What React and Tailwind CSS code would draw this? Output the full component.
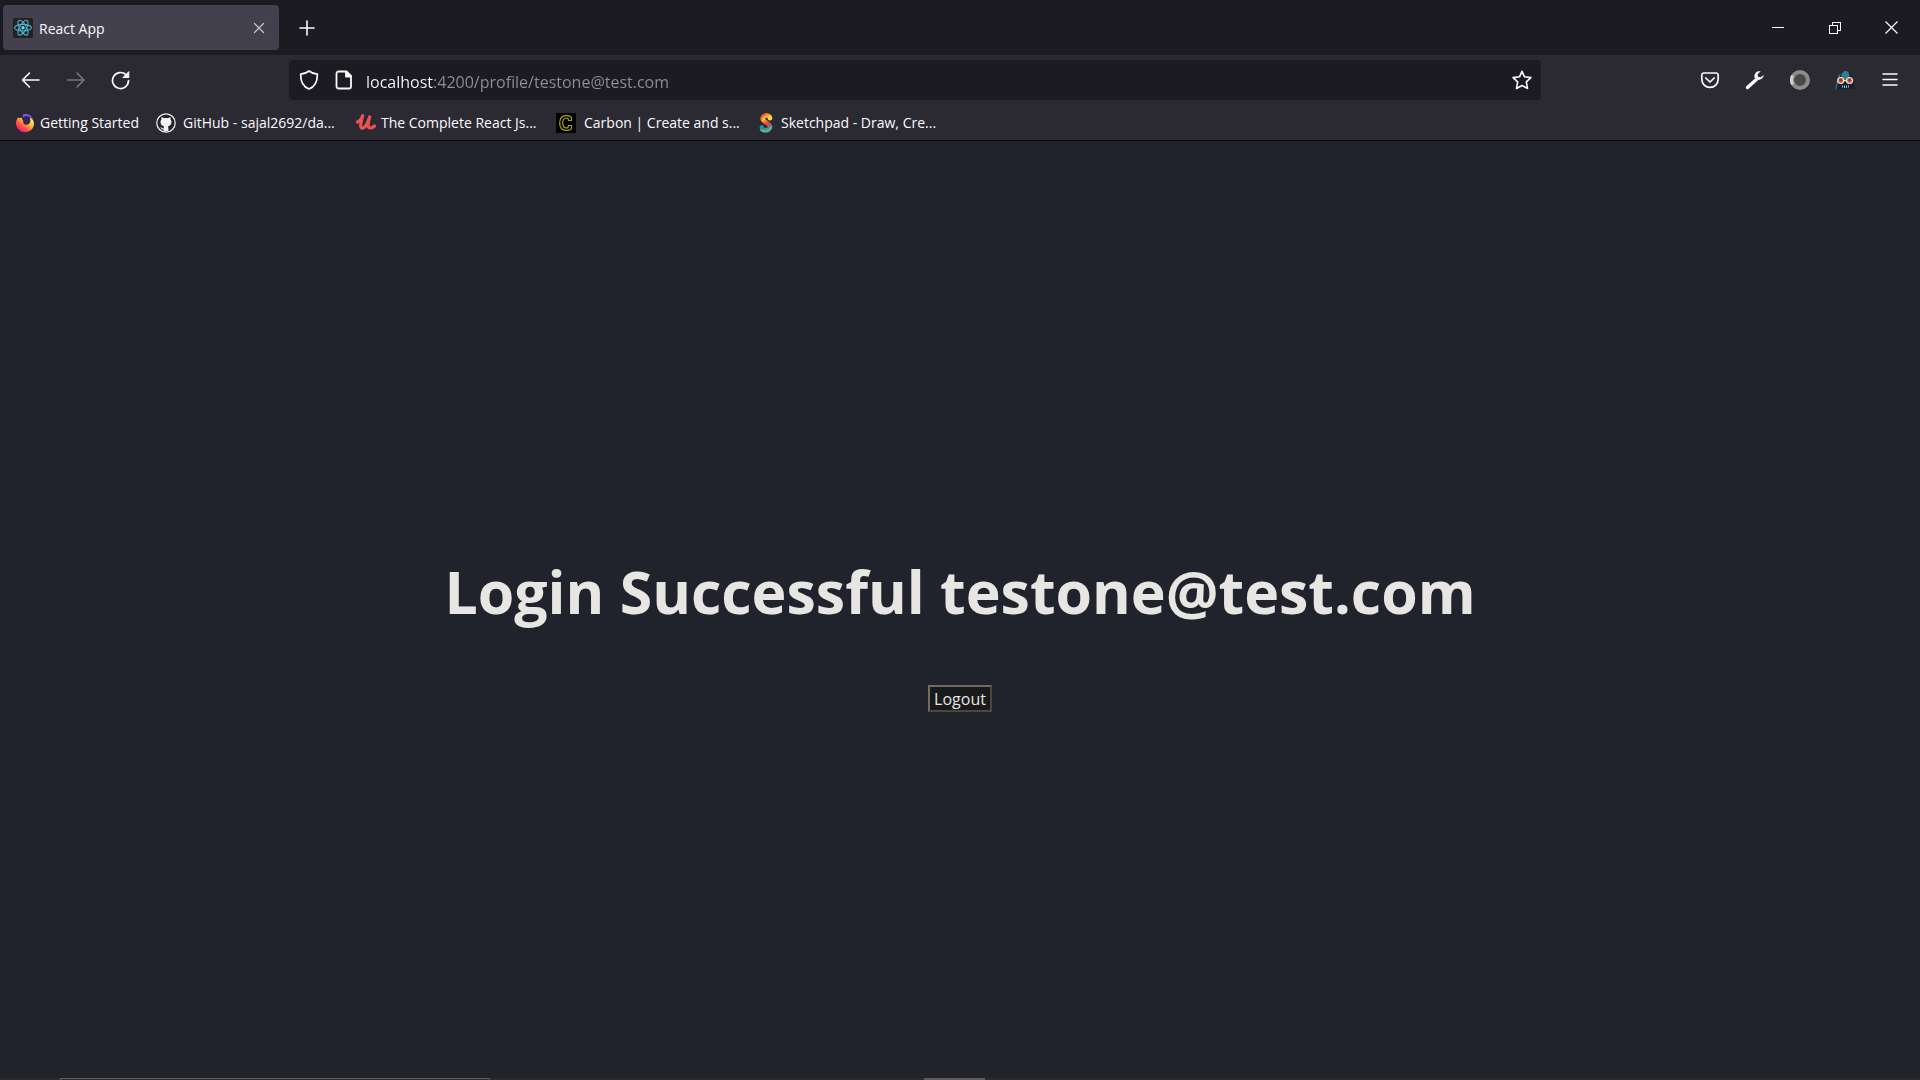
import React from "react";

const iconButton = "flex h-10 w-[45px] shrink-0 items-center justify-center rounded";

function ReactIcon() {
  return (
    <svg className="size-5 shrink-0" viewBox="0 0 20 20" aria-hidden="true">
      <rect width="20" height="20" rx="2" fill="#222222" />
      <g fill="none" stroke="#4fb3d0" strokeWidth="1.1">
        <ellipse cx="10" cy="9.7" rx="8.4" ry="3.3" />
        <ellipse cx="10" cy="9.7" rx="8.4" ry="3.3" transform="rotate(60 10 9.7)" />
        <ellipse cx="10" cy="9.7" rx="8.4" ry="3.3" transform="rotate(120 10 9.7)" />
      </g>
      <circle cx="10" cy="9.7" r="1.7" fill="#61dafb" />
    </svg>
  );
}

function FirefoxIcon() {
  return (
    <svg className="size-5 shrink-0" viewBox="0 0 20 20" aria-hidden="true">
      <defs>
        <linearGradient id="fox" x1="0.85" y1="0.15" x2="0.2" y2="0.9">
          <stop offset="0" stopColor="#fff44f" />
          <stop offset="0.35" stopColor="#ffb13b" />
          <stop offset="0.65" stopColor="#ff5a4a" />
          <stop offset="1" stopColor="#f5156c" />
        </linearGradient>
        <linearGradient id="globe" x1="0.3" y1="0" x2="0.6" y2="1">
          <stop offset="0" stopColor="#9059ff" />
          <stop offset="1" stopColor="#4a2a9c" />
        </linearGradient>
      </defs>
      <path d="M8 1.600C12 -.3 18 2.500 18.700 8.500L15 13L8 8Z" fill="url(#globe)" />
      <circle cx="11.500" cy="7.800" r="4.700" fill="#33284f" />
      <path d="M3.200 4.200C3.700 4.500 4 5 4.300 5.300C5 4.800 6 4.500 7.200 4.700C7 6 7.300 7 8.300 7.700C7.600 10.500 9.600 12 11.700 11.800C15.200 11.500 16.300 8 14.800 4.800C17.500 6 19 8.300 19 11C18.700 15.800 14.800 19.200 10 19.200C4.600 19.200 1 15 1 10.300C1 8 1.800 6 3.200 4.200Z" fill="url(#fox)" />
    </svg>
  );
}

function GitHubIcon() {
  return (
    <svg className="size-5 shrink-0" viewBox="0 0 20 20" aria-hidden="true">
      <circle cx="10" cy="10" r="9.800" fill="#f4f4f6" />
      <circle cx="10" cy="10" r="8.600" fill="#24232a" />
      <path d="M5.600 4.300C6.500 4.300 7.400 4.800 8 5.300C9.300 5 10.700 5 12 5.300C12.700 4.800 13.600 4.300 14.400 4.300C14.800 5.200 14.700 6 14.500 6.500C15.400 7.500 15.600 8.700 15.400 9.900C15 12 13.700 13 11.800 13.200C12.300 13.800 12.400 14.400 12.400 15V18.300H7.600V16.500C6 16.800 5.400 16 5 15.200C4.800 14.800 4.500 14.500 4.100 14.200C5.500 13.900 5.900 15.400 7.100 15.400H7.600C7.600 14.500 7.700 13.700 8.200 13.200C6.300 13 5 12 4.600 9.900C4.400 8.700 4.600 7.500 5.500 6.500C5.300 6 5.200 5.200 5.600 4.300Z" fill="#f4f4f6" />
    </svg>
  );
}

function UdemyIcon() {
  return (
    <svg className="size-5 shrink-0" viewBox="0 0 20 20" aria-hidden="true" fill="none" stroke="#ec5252" strokeLinecap="round" strokeLinejoin="round">
      <path d="M1.500 9C4 8 5.500 5.500 6.700 2.600C6 6 4.500 10 4.700 13C5 17.500 10 15 12.500 7" strokeWidth="3.200" />
      <path d="M13.700 4C12.500 7.500 11.800 11 12.300 13.500C13 16 16.500 15 18.500 13" strokeWidth="3.200" />
    </svg>
  );
}

function CarbonIcon() {
  return (
    <svg className="size-5 shrink-0" viewBox="0 0 20 20" aria-hidden="true">
      <rect width="20" height="20" fill="#000" />
      <path d="M15.500 7.500V5.500C15.500 3.800 14 2.700 11 2.700H10C6 2.700 3.700 5.500 3.700 10S6 17.300 10 17.300H11C14 17.300 15.500 16.200 15.500 14.500V12.500H12.500C12.500 14.400 12 15 10.500 15C7.700 15 6.700 13.300 6.700 10S7.700 5 10.500 5C12 5 12.500 5.600 12.500 7.500Z" fill="none" stroke="#a8a117" strokeWidth="1.200" />
    </svg>
  );
}

function SketchpadIcon() {
  return (
    <svg className="size-5 shrink-0" viewBox="0 0 20 20" aria-hidden="true">
      <defs>
        <linearGradient id="sketch" x1="0" y1="0" x2="0.3" y2="1">
          <stop offset="0" stopColor="#f26522" />
          <stop offset="0.3" stopColor="#ffc53a" />
          <stop offset="0.55" stopColor="#f26522" />
          <stop offset="0.75" stopColor="#e5402a" />
          <stop offset="1" stopColor="#2a9ad4" />
        </linearGradient>
      </defs>
      <path d="M14.300 5C13.500 2.300 10 1.600 8 3.400C5.500 5.700 7.500 8 10.500 9.700C14.500 12 15 14.500 12.500 16.500C10 18.200 6.500 17 5.700 14.500" fill="none" stroke="url(#sketch)" strokeWidth="4.600" />
      <path d="M7.500 18.300C12 19 14.800 16.500 15.300 13.500" fill="none" stroke="#78b843" strokeWidth="1.800" />
      <path d="M4.500 16.500C6 18 7.500 18.500 9 18" fill="none" stroke="#78b843" strokeWidth="2" />
      <circle cx="14" cy="5.300" r="2.200" fill="#ffdd3c" />
      <circle cx="5.800" cy="14.500" r="2.200" fill="#218fc7" />
      <path d="M5 7C4.500 3.500 6.500 1.300 9 1" fill="none" stroke="#e14d2c" strokeWidth="1.300" />
    </svg>
  );
}

function Stroke({ children, size = 20, width = 2, className = "" }) {
  return (
    <svg width={size} height={size} viewBox={`0 0 ${size} ${size}`} fill="none" stroke="currentColor" strokeWidth={width} strokeLinecap="round" strokeLinejoin="round" className={`shrink-0 ${className}`} aria-hidden="true">
      {children}
    </svg>
  );
}

const bookmarks = [
  { label: "Getting Started", Icon: FirefoxIcon, box: "w-[126px] gap-[5px]" },
  { label: "GitHub - sajal2692/da...", Icon: GitHubIcon, box: "w-[185px] gap-[7px]" },
  { label: "The Complete React Js...", Icon: UdemyIcon, box: "w-[185px] gap-[5px]" },
  { label: "Carbon | Create and s...", Icon: CarbonIcon, box: "w-[185px] gap-2" },
  { label: "Sketchpad - Draw, Cre...", Icon: SketchpadIcon, box: "w-[185px] gap-[5px]" },
];

function TabStrip() {
  return (
    <header className="flex h-[55px] items-center bg-[#1c1b22]">
      <div className="ml-[3px] flex h-[45px] w-[276px] items-center rounded bg-[#42414d] pl-[10px] pr-[12px]">
        <ReactIcon />
        <span className="ml-[6px] flex-1 pt-[2px] text-[14px]">React App</span>
        <button aria-label="Close tab" className="text-[#c4c4ca]">
          <Stroke size={16} width={1.2}><path d="M3.500 3.500L12.500 12.500M12.500 3.500L3.500 12.500" /></Stroke>
        </button>
      </div>
      <button aria-label="New tab" className="ml-[18px]">
        <Stroke width={1.6}><path d="M10 3V17M3 10H17" /></Stroke>
      </button>
      <div className="flex-1" />
      <button aria-label="Minimize" className="flex h-full w-[57px] items-center justify-center">
        <svg width="12" height="12" viewBox="0 0 12 12" stroke="currentColor" shapeRendering="crispEdges"><path d="M0 5.500H12" /></svg>
      </button>
      <button aria-label="Restore" className="flex h-full w-[57px] items-center justify-center">
        <svg width="12" height="12" viewBox="0 0 12 12" fill="none" stroke="currentColor" shapeRendering="crispEdges"><path d="M.5 3.500H8.500V11.500H.5ZM3.500 3V.5H11.500V8.500H9" /></svg>
      </button>
      <button aria-label="Close window" className="flex h-full w-[57px] items-center justify-center">
        <svg width="13" height="13" viewBox="0 0 13 13" stroke="currentColor" strokeWidth="1.200"><path d="M.5 .5L12.500 12.500M12.500 .5L.5 12.500" /></svg>
      </button>
    </header>
  );
}

function NavBar() {
  return (
    <nav className="flex h-[50px] items-center px-2">
      <button aria-label="Back" className={iconButton}>
        <Stroke width={1.6}><path d="M18 10H1.500M8.500 3L1.500 10L8.500 17" /></Stroke>
      </button>
      <button aria-label="Forward" className={`${iconButton} text-[#77767e]`}>
        <Stroke width={1.6}><path d="M1.500 10H18M11 3L18 10L11 17" /></Stroke>
      </button>
      <button aria-label="Reload" className={iconButton}>
        <svg width="20" height="20" viewBox="0 0 20 20" fill="none" stroke="currentColor" strokeWidth="1.700" strokeLinecap="round" aria-hidden="true">
          <path d="M17.500 10.500A8 8 0 1 1 15 4.700" />
          <path d="M17.800 2V7.500H12.300Z" fill="currentColor" strokeWidth="1" strokeLinejoin="round" />
        </svg>
      </button>
      <div className="w-[146px]" />
      <div className="flex h-10 flex-1 items-center rounded bg-[#1c1b22] pl-[10px] pr-[9px]">
        <button aria-label="Site protection">
          <Stroke width={1.7}><path d="M10 1C12.500 3 15 3.900 18.300 4.200C18.500 10 17.500 16 10 19C2.500 16 1.500 10 1.700 4.200C5 3.900 7.500 3 10 1Z" /></Stroke>
        </button>
        <button aria-label="Site information" className="ml-[15px]">
          <Stroke width={1.8}>
            <path d="M4.500 1.500H12.500L17 6V16.500A2 2 0 0 1 15 18.500H4.500A2 2 0 0 1 2.500 16.500V3.500A2 2 0 0 1 4.500 1.500Z" />
            <path d="M12 2V6.500H16.500Z" fill="currentColor" />
          </Stroke>
        </button>
        <input
          aria-label="Address"
          defaultValue="localhost:4200/profile/testone@test.com"
          className="ml-[12px] h-10 flex-1 bg-[linear-gradient(90deg,#fbfbfe_68px,#8f8e98_68px)] bg-clip-text pt-[3px] text-[16px] text-transparent caret-white outline-none"
        />
        <button aria-label="Bookmark this page">
          <Stroke width={1.6}><path d="M10 1.300L12.500 6.800L18.900 7.600L14.300 11.900L15.500 18.500L10 15.500L4.500 18.500L5.700 11.900L1.100 7.600L7.500 6.800Z" /></Stroke>
        </button>
      </div>
      <div className="w-[146px]" />
      <button aria-label="Save to Pocket" className={iconButton}>
        <Stroke width={1.7}>
          <path d="M3.500 3H16.500A2 2 0 0 1 18.200 5V9C18.200 14 14.500 17.300 10 17.300S1.800 14 1.800 9V5A2 2 0 0 1 3.500 3Z" />
          <path d="M5.800 8L10 12L14.200 8" />
        </Stroke>
      </button>
      <button aria-label="Developer tools" className={iconButton}>
        <svg width="20" height="20" viewBox="0 0 20 20" aria-hidden="true">
          <path d="M2.500 17.500L12.500 8.500" stroke="currentColor" strokeWidth="3.400" strokeLinecap="round" />
          <path d="M15.800 1.300A5.200 5.200 0 0 0 9.600 7.800A5.200 5.200 0 0 0 18.800 5L15.600 7.300L12.900 6.800L12.700 4Z" fill="currentColor" />
        </svg>
      </button>
      <button aria-label="Recorder extension" className={iconButton}>
        <svg width="20" height="20" viewBox="0 0 20 20" aria-hidden="true">
          <circle cx="10" cy="10" r="8" fill="#4a4a4a" stroke="#8b8b8b" strokeWidth="4" />
          <path d="M2.800 5.500A8.300 8.300 0 0 0 2.800 14.500" fill="none" stroke="#d0d0d0" strokeWidth="3" />
        </svg>
      </button>
      <button aria-label="Privacy extension" className={iconButton}>
        <svg width="20" height="20" viewBox="0 0 20 20" aria-hidden="true">
          <path d="M0 19C2 14 1.500 8 4 4.500C6 0 14 0 16 4.500C18.500 9 18 14 20 19Z" fill="#15222b" />
          <path d="M0 19C2 14 1.500 8 4 4.500L6 3L4.500 8L1.500 19Z" fill="#2b7486" />
          <path d="M6.500 8C5.500 3.500 8 1 10.500 1S15.500 3.500 14 8L10 9.500Z" fill="#2f7f92" />
          <path d="M6 10.500H14.500" stroke="#f3e5d8" strokeWidth="1.500" />
          <circle cx="5.700" cy="10.500" r="3" fill="#dc4d32" stroke="#f3e5d8" strokeWidth="1.200" />
          <circle cx="14.500" cy="10.500" r="3" fill="#dc4d32" stroke="#f3e5d8" strokeWidth="1.200" />
          <path d="M4.500 10H7M13.500 10H16" stroke="#3a2a2a" />
          <path d="M7.500 15.500V17.500M9.500 15.500V18M11.500 15.500V18M13.500 15.500V17.500" stroke="#8fc3d1" />
        </svg>
      </button>
      <button aria-label="Open menu" className={iconButton}>
        <Stroke width={1.5}><path d="M3 4H17M3 9.500H17M3 15H17" /></Stroke>
      </button>
    </nav>
  );
}

export default function App() {
  return (
    <div className="flex min-h-screen flex-col bg-[#20232b] font-['Open_Sans','Noto_Sans',sans-serif] text-[#fbfbfe]">
      <TabStrip />
      <div className="border-b border-[#0c0c0e] bg-[#2b2a33]">
        <NavBar />
        <div className="flex h-[35px] items-center gap-[15px] pl-[15px]">
          {bookmarks.map(({ label, Icon, box }) => (
            <a key={label} href="#" className={`flex items-center whitespace-nowrap text-[14px] ${box}`}>
              <Icon />
              {label}
            </a>
          ))}
        </div>
      </div>
      <main className="flex flex-1 flex-col items-center justify-center gap-[50px] pt-10 text-[#e8e6e3]">
        <h1 className="text-[59px] leading-[88px] font-bold">Login Successful testone@test.com</h1>
        <button className="h-[27px] border-2 border-t-[#736b5e] border-l-[#736b5e] border-r-[#4d463c] border-b-[#4d463c] bg-[#181a1b] px-1 text-[16px] leading-[22px]">
          Logout
        </button>
      </main>
      <footer className="flex h-[2px] bg-[#2d2a2e]">
        <div className="ml-[60px] w-[430px] border-x border-t border-[#5a5a5a]" />
        <div className="ml-[434px] w-[61px] bg-[#5c5c5f]" />
      </footer>
    </div>
  );
}
